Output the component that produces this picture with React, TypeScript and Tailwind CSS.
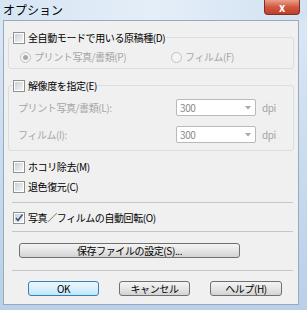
import React from 'react';

const font = { fontFamily: '"Noto Sans CJK JP", "Noto Sans", sans-serif' };

function CheckBox({ checked = false }: { checked?: boolean }) {
    return (
        <span className="relative flex h-[12px] w-[12px] shrink-0 items-center justify-center border border-[#8e8f8f] bg-white">
            <span className="h-[8px] w-[8px] bg-gradient-to-br from-[#cbcfd5] to-[#f6f6f6]" />
            {checked && (
                <svg className="absolute left-[0px] top-[0px] h-[10px] w-[10px]" viewBox="0 0 10 10">
                    <path d="M2 5 L4 7.5 L8.5 1.5" fill="none" stroke="#3b4f8a" strokeWidth="1.6" />
                </svg>
            )}
        </span>
    );
}

function Radio({ checked = false }: { checked?: boolean }) {
    return (
        <span className="flex h-[11px] w-[11px] shrink-0 items-center justify-center rounded-full border border-[#c2c2c2] bg-[#f4f4f4]">
            {checked && <span className="h-[5px] w-[5px] rounded-full bg-[#a8a8a8]" />}
        </span>
    );
}

function Combo() {
    return (
        <div className="flex h-[17px] w-[80px] items-center justify-between rounded-[2px] border border-[#b9b9b9] bg-white pl-[3px] pr-[4px] text-[10px] text-[#8a8a8a]">
            <span>300</span>
            <svg className="h-[4px] w-[6px]" viewBox="0 0 6 4">
                <path d="M0 0 L6 0 L3 3.5 Z" fill="#a8a8a8" />
            </svg>
        </div>
    );
}

function Separator({ className = '' }: { className?: string }) {
    return <div className={`ml-[8px] h-[2px] w-[281px] border-t border-[#c6c6c6] border-b-white ${className}`} />;
}

function PushButton({ label, def = false, className = '' }: { label: string; def?: boolean; className?: string }) {
    return (
        <div
            className={`flex h-[15px] items-center justify-center rounded-[3px] border text-[10px] leading-none text-black ${
                def
                    ? 'border-[#3c7fb1] bg-gradient-to-b from-[#eaf6fd] via-[#d9f0fc] to-[#bee6fd]'
                    : 'border-[#707070] bg-gradient-to-b from-[#f4f4f4] via-[#e6e6e6] to-[#d3d3d3]'
            } ${className}`}
        >
            {label}
        </div>
    );
}

export default function App() {
    return (
        <div className="flex h-[310px] w-[307px] flex-col bg-gradient-to-b from-[#dce9f6] via-[#cadcef] to-[#b9d0e8]" style={font}>
            {/* Title bar */}
            <div className="flex h-[20px] shrink-0 items-start justify-between bg-gradient-to-r from-[#d6e5f3] via-[#e4eef8] to-[#d2e2f2]">
                <span className="ml-[3px] mt-[2px] text-[12px] leading-[16px] text-black">オプション</span>
                <div className="mr-[7px] flex h-[15px] w-[36px] items-center justify-center rounded-b-[4px] border border-t-0 border-[#7b3124] bg-gradient-to-b from-[#e8a08c] via-[#d1583f] to-[#c0402a]">
                    <span className="text-[11px] font-bold leading-none text-white">x</span>
                </div>
            </div>

            {/* Client area */}
            <div className="mb-[5px] ml-[3px] mr-[8px] flex-1 border border-[#97aac0] bg-[#f0f0f0] text-[10px] leading-none tracking-[-0.4px] text-black">
                {/* Group 1 */}
                <div className="ml-[4px] mt-[16px] w-[286px] rounded-[3px] border border-[#d5dfe5] pb-[4px]">
                    <div className="-mt-[7px] ml-[3px] flex h-[14px] w-fit items-center gap-[3px] bg-[#f0f0f0] px-[1px]">
                        <CheckBox />
                        <span>全自動モードで用いる原稿種(D)</span>
                    </div>
                    <div className="mt-[5px] flex h-[14px] items-center pl-[11px] text-[#a6a6a6]">
                        <div className="flex w-[151px] items-center gap-[3px]">
                            <Radio checked />
                            <span>プリント写真/書類(P)</span>
                        </div>
                        <div className="flex items-center gap-[3px]">
                            <Radio />
                            <span>フィルム(F)</span>
                        </div>
                    </div>
                </div>

                {/* Group 2 */}
                <div className="ml-[4px] mt-[16px] w-[286px] rounded-[3px] border border-[#d5dfe5] pb-[7px]">
                    <div className="-mt-[7px] ml-[3px] flex h-[14px] w-fit items-center gap-[3px] bg-[#f0f0f0] px-[1px]">
                        <CheckBox />
                        <span>解像度を指定(E)</span>
                    </div>
                    <div className="mt-[6px] flex items-center pl-[9px] text-[#a6a6a6]">
                        <span className="w-[158px]">プリント写真/書類(L):</span>
                        <Combo />
                        <span className="ml-[6px]">dpi</span>
                    </div>
                    <div className="mt-[10px] flex items-center pl-[9px] text-[#a6a6a6]">
                        <span className="w-[158px]">フィルム(I):</span>
                        <Combo />
                        <span className="ml-[6px]">dpi</span>
                    </div>
                </div>

                <div className="ml-[9px] mt-[9px] flex h-[14px] items-center gap-[3px]">
                    <CheckBox />
                    <span>ホコリ除去(M)</span>
                </div>
                <div className="ml-[9px] mt-[6px] flex h-[14px] items-center gap-[3px]">
                    <CheckBox />
                    <span>退色復元(C)</span>
                </div>

                <Separator className="mt-[8px]" />

                <div className="ml-[9px] mt-[7px] flex h-[14px] items-center gap-[3px]">
                    <CheckBox checked />
                    <span>写真／フィルムの自動回転(O)</span>
                </div>

                <Separator className="mt-[6px]" />

                <PushButton label="保存ファイルの設定(S)..." className="ml-[15px] mt-[10px] w-[221px]" />

                <Separator className="mt-[12px]" />

                <div className="ml-[24px] mt-[9px] flex gap-[20px]">
                    <PushButton label="OK" def className="w-[71px]" />
                    <PushButton label="キャンセル" className="w-[71px]" />
                    <PushButton label="ヘルプ(H)" className="w-[72px]" />
                </div>
            </div>
        </div>
    );
}
